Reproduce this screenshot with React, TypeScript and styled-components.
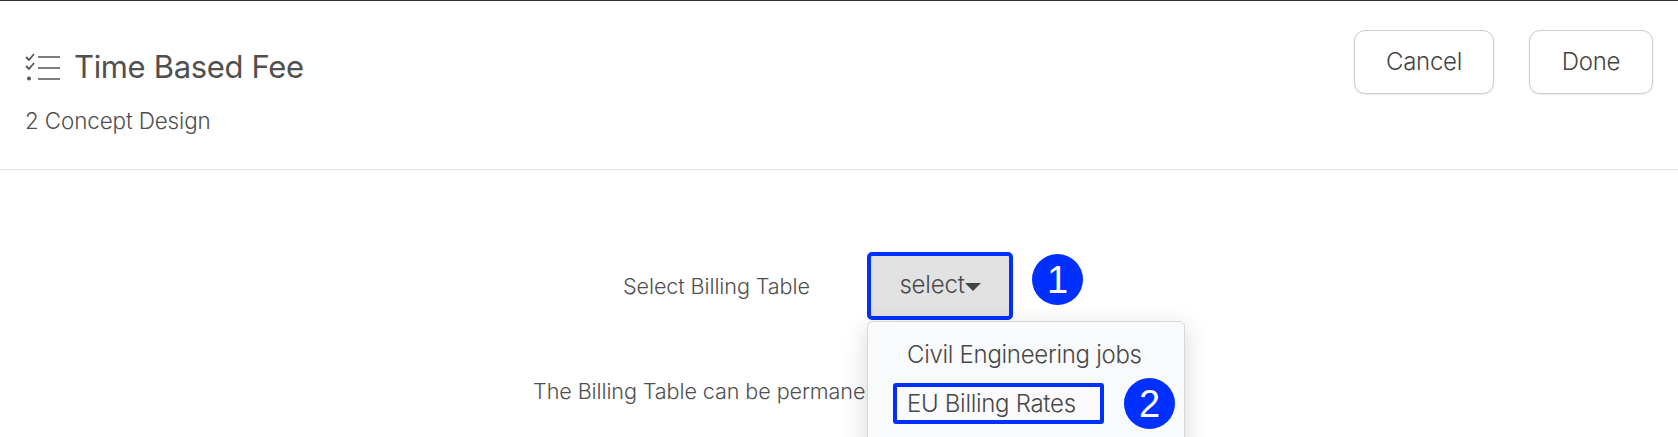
import { createGlobalStyle, styled } from "styled-components";

const GlobalStyle = createGlobalStyle`
  html, body {
    margin: 0;
    padding: 0;
    background: #fff;
    overflow: hidden;
  }
  body {
    font-family: "Inter", "Open Sans", sans-serif;
    color: #4f4f4f;
  }
`;

const Page = styled.div`
  width: 1678px;
  height: 437px;
  overflow: hidden;
  border-top: 1px solid #333;
  box-sizing: border-box;
  background: #fff;
`;

const Header = styled.header`
  height: 169px;
  box-sizing: border-box;
  border-bottom: 1px solid #e4e4e4;
  display: flex;
  justify-content: space-between;
  padding: 29px 25px 0 25px;
`;

const TitleBlock = styled.div`
  display: flex;
  flex-direction: column;
`;

const TitleRow = styled.div`
  display: flex;
  align-items: center;
  gap: 13px;
  margin-top: 19px;
`;

const Title = styled.h1`
  margin: 0;
  font-size: 31px;
  line-height: 36px;
  font-weight: 400;
  letter-spacing: -0.35px;
  color: #505050;
`;

const Subtitle = styled.div`
  margin-top: 21px;
  font-size: 22.4px;
  line-height: 30px;
  font-weight: 300;
  letter-spacing: -0.1px;
`;

const Actions = styled.div`
  display: flex;
  gap: 35px;
`;

const ActionButton = styled.button<{ $width: number }>`
  width: ${(p) => p.$width}px;
  height: 64px;
  box-sizing: border-box;
  background: #fff;
  border: 1px solid #cdcdcd;
  border-radius: 11px;
  box-shadow: 0 1px 2px rgba(0, 0, 0, 0.08);
  font-family: inherit;
  font-size: 24px;
  font-weight: 300;
  letter-spacing: -0.3px;
  color: #444;
  padding: 0 0 2px;
`;

const Body = styled.main`
  display: flex;
  flex-direction: column;
  padding-top: 82px;
`;

const FormRow = styled.div`
  display: flex;
  align-items: center;
  padding-left: 623px;
  height: 68px;
`;

const Label = styled.label`
  width: 244px;
  font-size: 21.6px;
  font-weight: 300;
  letter-spacing: -0.1px;
`;

const SelectWrap = styled.div`
  position: relative;
`;

const SelectButton = styled.button`
  width: 146px;
  height: 68px;
  box-sizing: border-box;
  background: #e2e2e2;
  border: 4px solid #0030ff;
  border-radius: 5px;
  font-family: inherit;
  font-size: 24px;
  font-weight: 300;
  letter-spacing: -0.2px;
  color: #4a4a4a;
  display: flex;
  align-items: center;
  justify-content: center;
  padding: 0 0 3px;
`;

const Caret = styled.span`
  width: 0;
  height: 0;
  margin-top: 5px;
  border-left: 8px solid transparent;
  border-right: 8px solid transparent;
  border-top: 8px solid #444;
`;

const Badge = styled.span<{ $left: number; $top: number }>`
  position: absolute;
  left: ${(p) => p.$left}px;
  top: ${(p) => p.$top}px;
  width: 51px;
  height: 51px;
  border-radius: 50%;
  background: #0030ff;
  color: #fff;
  display: flex;
  align-items: center;
  justify-content: center;
  font-family: "Liberation Sans", sans-serif;
  font-size: 38px;
  line-height: 1;
`;

const Menu = styled.ul`
  position: absolute;
  left: 0;
  top: 69px;
  z-index: 2;
  width: 318px;
  height: 140px;
  margin: 0;
  padding: 15px 0 0;
  box-sizing: border-box;
  list-style: none;
  background: #f9fafc;
  border: 1px solid #d8d8d8;
  border-radius: 6px;
  box-shadow: 0 6px 24px rgba(0, 0, 0, 0.16);
`;

const MenuItem = styled.li`
  font-size: 24px;
  line-height: 36px;
  font-weight: 300;
  letter-spacing: -0.3px;
  color: #484848;
  padding-left: 39px;
`;

const HighlightItem = styled(MenuItem)`
  width: 211px;
  height: 41px;
  box-sizing: border-box;
  margin: 10px 0 0 25px;
  padding-left: 10px;
  line-height: 33px;
  background: #fbfbfd;
  border: 4px solid #0030ff;
  border-radius: 3px;
`;

const Note = styled.p`
  margin: 58px 0 0;
  padding-left: 533px;
  font-size: 21.6px;
  line-height: 26px;
  font-weight: 300;
  letter-spacing: -0.1px;
  white-space: nowrap;
`;

const ChecklistIcon = () => (
  <svg width="36" height="28" viewBox="0 0 36 28" fill="none" stroke="#555" strokeWidth="2">
    <path d="M1 4l3 3 5-6M1 13l3 3 5-6" strokeWidth="1.8" />
    <path d="M13 4h22M13 15h22M13 26h22" strokeWidth="1.6" />
    <circle cx="4" cy="25.5" r="2" fill="#555" stroke="none" />
  </svg>
);

export default function App() {
  return (
    <Page>
      <GlobalStyle />
      <Header>
        <TitleBlock>
          <TitleRow>
            <ChecklistIcon />
            <Title>Time Based Fee</Title>
          </TitleRow>
          <Subtitle>2 Concept Design</Subtitle>
        </TitleBlock>
        <Actions>
          <ActionButton $width={140}>Cancel</ActionButton>
          <ActionButton $width={124}>Done</ActionButton>
        </Actions>
      </Header>
      <Body>
        <FormRow>
          <Label>Select Billing Table</Label>
          <SelectWrap>
            <SelectButton>
              select
              <Caret />
            </SelectButton>
            <Badge $left={165} $top={2}>1</Badge>
            <Menu>
              <MenuItem>Civil Engineering jobs</MenuItem>
              <HighlightItem>EU Billing Rates</HighlightItem>
              <Badge $left={256} $top={56}>2</Badge>
            </Menu>
          </SelectWrap>
        </FormRow>
        <Note>The Billing Table can be permanently set for this fee item</Note>
      </Body>
    </Page>
  );
}
